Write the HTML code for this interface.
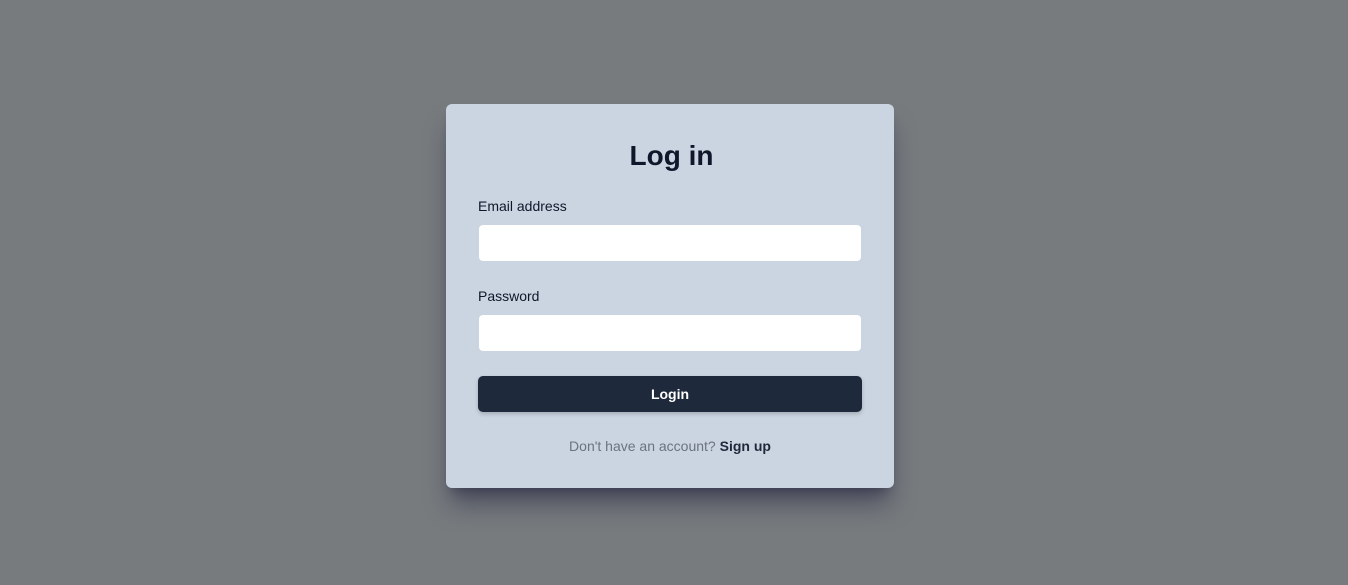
<!DOCTYPE html>
<html><head><style>
html,body{margin:0;width:1348px;height:585px;background:#777b7e;font-family:"Liberation Sans",sans-serif;overflow:hidden}
.card{position:absolute;left:446px;top:104px;width:448px;height:384px;background:#cbd5e1;border-radius:6px;box-shadow:0 20px 25px -5px rgba(30,30,60,.5),0 8px 10px -6px rgba(30,30,60,.4)}
h1{position:absolute;left:0;right:5px;top:137px;margin:0;text-align:center;font-size:28px;font-weight:bold;color:#0f172a;line-height:38px}
.lbl{position:absolute;left:478px;font-size:14px;color:#0f172a;line-height:18px}
.inp{position:absolute;left:479px;width:382px;height:36px;background:#fff;border-radius:4px}
.btn{position:absolute;left:478px;top:376px;width:384px;height:36px;background:#1e293b;border-radius:5px;color:#fff;font-weight:bold;font-size:14px;text-align:center;line-height:36px;box-shadow:0 2px 4px rgba(0,0,0,.2)}
.ft{position:absolute;left:446px;width:448px;top:437px;text-align:center;font-size:14px;color:#6b7280;line-height:18px}
.ft b{color:#1e293b}
</style></head><body>
<div class="card"></div>
<h1>Log in</h1>
<div class="lbl" style="top:197px">Email address</div>
<div class="inp" style="top:225px"></div>
<div class="lbl" style="top:287px">Password</div>
<div class="inp" style="top:315px"></div>
<div class="btn">Login</div>
<div class="ft">Don't have an account? <b>Sign up</b></div>
</body></html>
